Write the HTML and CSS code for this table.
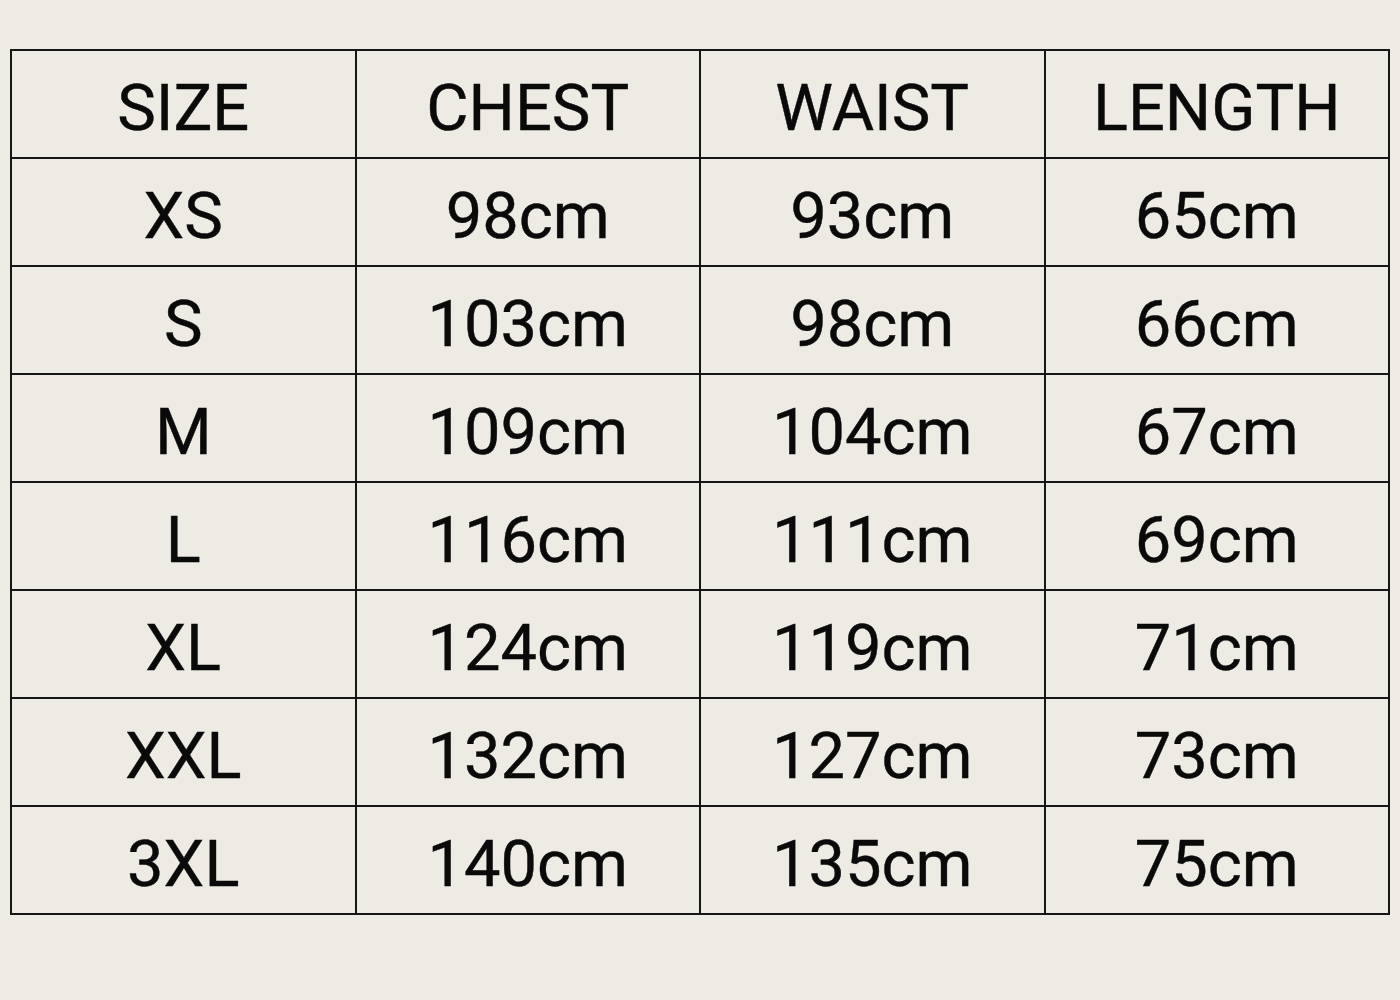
FILE: index.html
```html
<!DOCTYPE html>
<html>
<head>
<meta charset="utf-8">
<link rel="stylesheet" href="styles.css">
</head>
<body>
<div class="chart">
  <div class="cell">SIZE</div><div class="cell">CHEST</div><div class="cell">WAIST</div><div class="cell">LENGTH</div>
  <div class="cell">XS</div><div class="cell">98cm</div><div class="cell">93cm</div><div class="cell">65cm</div>
  <div class="cell">S</div><div class="cell">103cm</div><div class="cell">98cm</div><div class="cell">66cm</div>
  <div class="cell">M</div><div class="cell">109cm</div><div class="cell">104cm</div><div class="cell">67cm</div>
  <div class="cell">L</div><div class="cell">116cm</div><div class="cell">111cm</div><div class="cell">69cm</div>
  <div class="cell">XL</div><div class="cell">124cm</div><div class="cell">119cm</div><div class="cell">71cm</div>
  <div class="cell">XXL</div><div class="cell">132cm</div><div class="cell">127cm</div><div class="cell">73cm</div>
  <div class="cell">3XL</div><div class="cell">140cm</div><div class="cell">135cm</div><div class="cell">75cm</div>
</div>
</body>
</html>
```
FILE: styles.css
```css
html, body {
  margin: 0;
  background: #eeebe5;
}
body {
  padding: 49px 0 0 10px;
  width: 1400px;
  height: 1000px;
  box-sizing: border-box;
  font-family: Roboto, "Liberation Sans", sans-serif;
  color: #0a0a0a;
}
.chart {
  width: 1380px;
  box-sizing: border-box;
  display: grid;
  grid-template-columns: repeat(4, 1fr);
  border-left: 2px solid #161616;
  border-top: 2px solid #161616;
}
.cell {
  box-sizing: content-box;
  height: 98px;
  padding-top: 8px;
  border-right: 2px solid #161616;
  border-bottom: 2px solid #161616;
  display: flex;
  align-items: center;
  justify-content: center;
  font-size: 65px;
  line-height: 1;
  -webkit-text-stroke: 0.4px #0a0a0a;
}
```
